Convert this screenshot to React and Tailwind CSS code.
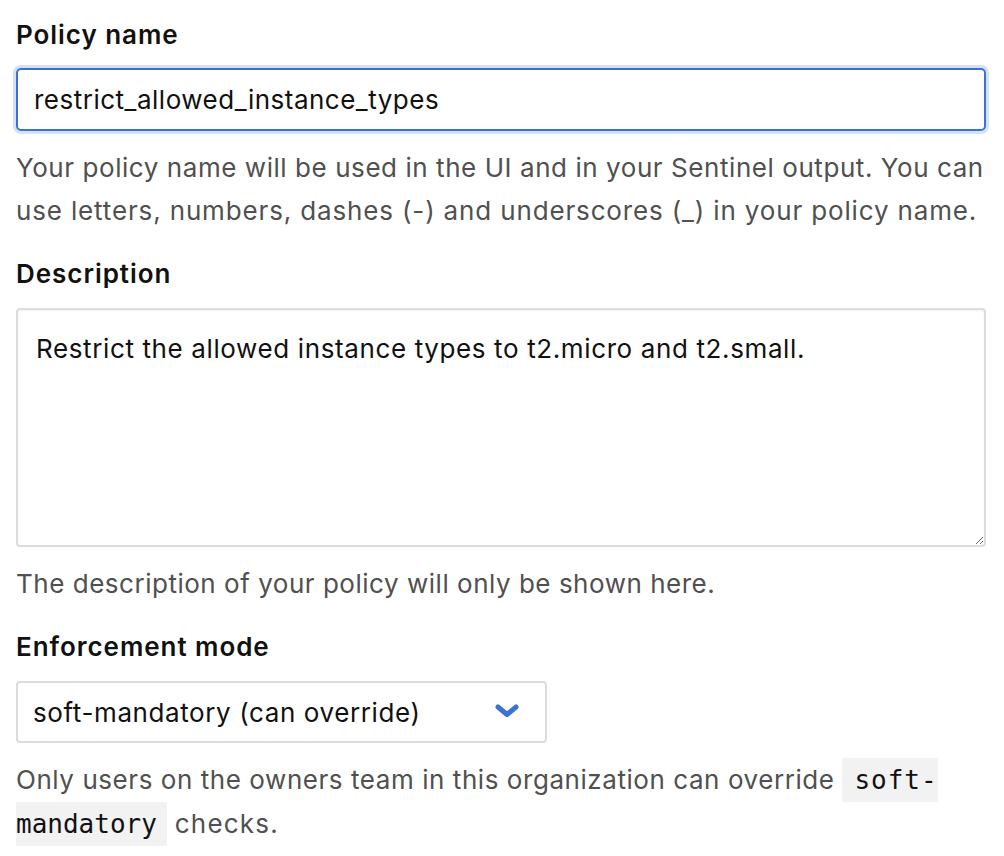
import React from "react";

const sans = { fontFamily: "Inter, 'Noto Sans', sans-serif" };
const mono = { fontFamily: "'DejaVu Sans Mono', 'Liberation Mono', monospace", letterSpacing: 0 };

export default function App() {
  return (
    <div className="w-[1004px] h-[856px] bg-white overflow-hidden pl-4 pr-[18px] pt-[17px] tracking-[0.56px]" style={sans}>
      <div className="flex flex-col">
        <label className="text-[26px] leading-[36px] font-semibold text-[#111] tracking-[0.95px]">Policy name</label>
        <div className="mt-[15px] h-[63px] rounded-[5px] border-2 border-[#3d70d4] shadow-[0_0_0_3px_#d4e1f8] flex items-center pl-4">
          <input
            className="w-full outline-none bg-transparent text-[26px] text-[#111] tracking-[0.5px]"
            defaultValue="restrict_allowed_instance_types"
            style={sans}
          />
        </div>
        <p className="mt-[15px] text-[26px] leading-[43px] text-[#505050]">
          Your policy name will be used in the UI and in your Sentinel output. You can{" "}
          <span className="tracking-[0.85px]">use letters, numbers, dashes (-) and underscores (_) in your policy name.</span>
        </p>

        <label className="mt-[24px] text-[26px] leading-[36px] font-semibold text-[#111] tracking-[0.95px]">Description</label>
        <textarea
          className="mt-[16px] h-[239px] rounded-[4px] border-2 border-[#dcdcdc] shadow-[inset_0_1px_2px_rgba(0,0,0,0.06)] px-[18px] py-[17px] text-[26px] leading-[43px] text-[#111] outline-none resize-y tracking-[0.62px]"
          defaultValue="Restrict the allowed instance types to t2.micro and t2.small."
          style={sans}
        />
        <p className="mt-[15px] text-[26px] leading-[43px] text-[#505050] tracking-[0.52px]">
          The description of your policy will only be shown here.
        </p>

        <label className="mt-[24px] text-[26px] leading-[36px] font-semibold text-[#111] tracking-[0.95px]">Enforcement mode</label>
        <div className="mt-[16px] w-[531px] h-[62px] rounded-[4px] border-2 border-[#dcdcdc] flex items-center justify-between pl-[15px] pr-[26px]">
          <span className="text-[26px] text-[#111] tracking-[0.6px]">soft-mandatory (can override)</span>
          <svg width="24" height="14" viewBox="0 0 24 14" className="mt-[-2px]">
            <polyline points="3,3 12,10.5 21,3" fill="none" stroke="#3c72d6" strokeWidth="5" strokeLinecap="round" strokeLinejoin="round" />
          </svg>
        </div>
        <p className="mt-[15px] text-[26px] leading-[44px] text-[#505050]">
          Only users on the owners team in this organization can override{" "}
          <code className="bg-[#f2f2f2] text-[#111] pl-[12px] py-[7px] text-[26px] tracking-[1px]" style={{ ...mono, letterSpacing: "1px" }}>soft-</code>
          <br />
          <code className="bg-[#f2f2f2] text-[#111] pr-[10px] py-[7px] text-[26px]" style={mono}>mandatory</code>{" "}
          <span className="tracking-[1.2px]">checks.</span>
        </p>
      </div>
    </div>
  );
}
